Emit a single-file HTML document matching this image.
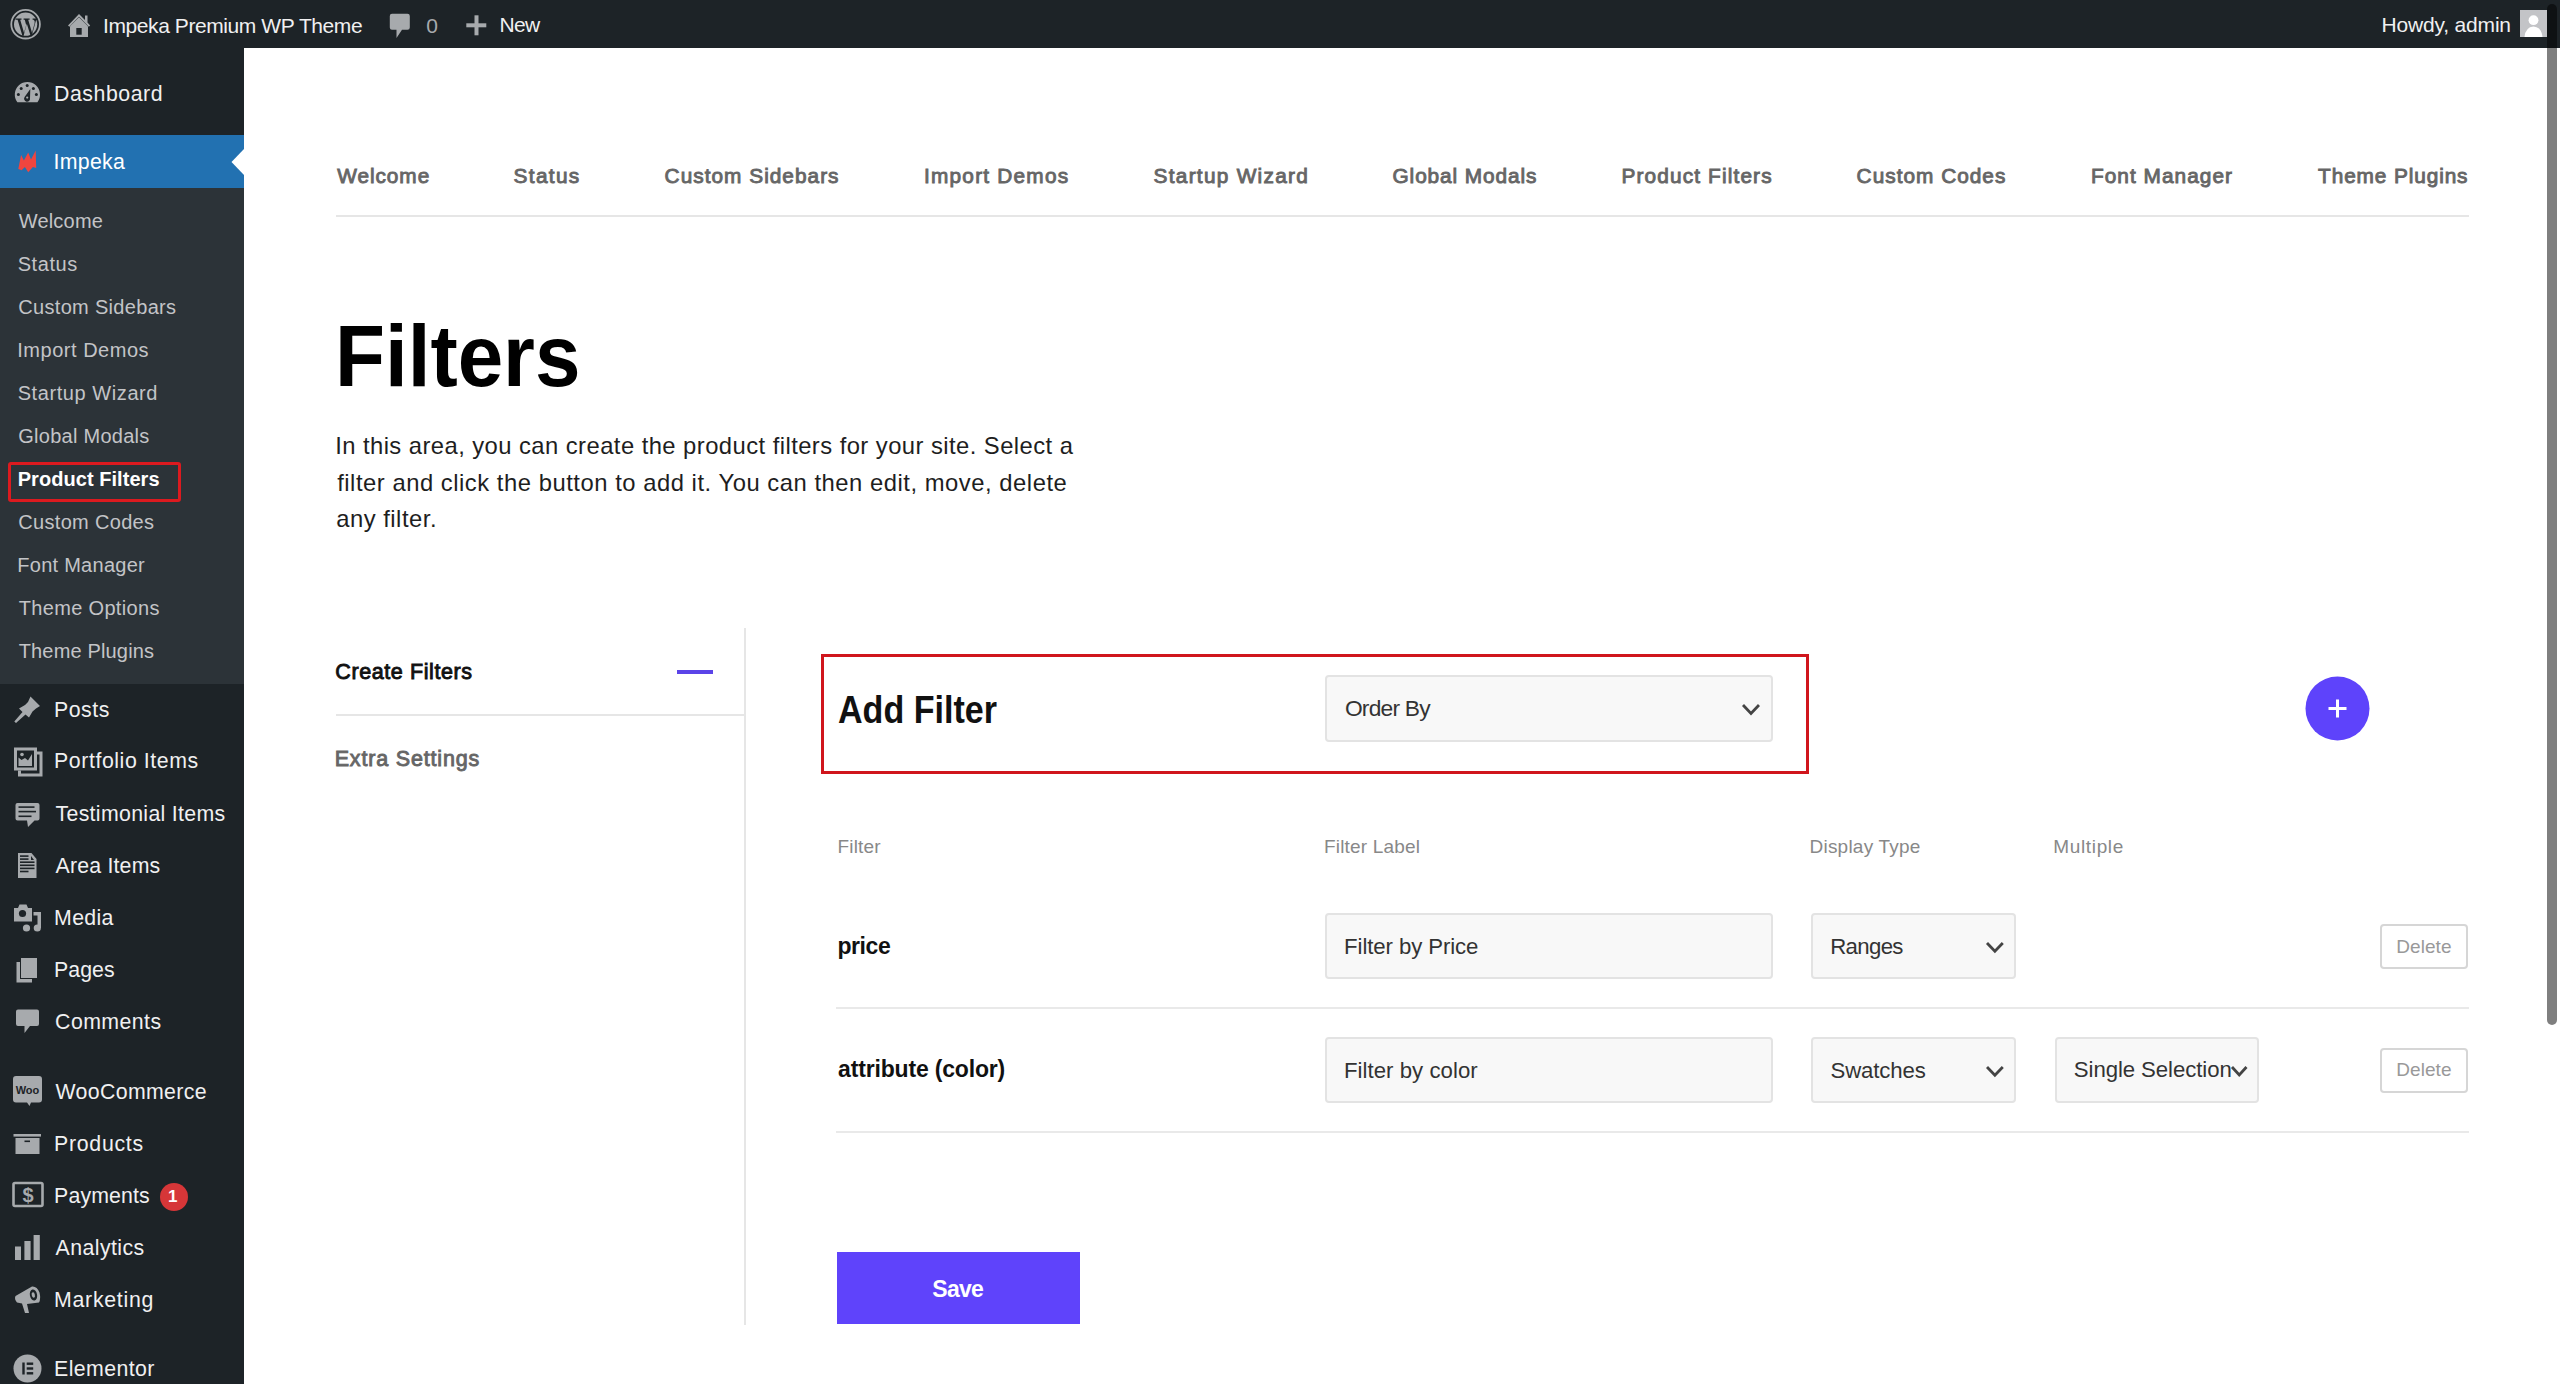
<!DOCTYPE html><html><head><meta charset="utf-8"><style>
*{box-sizing:border-box;margin:0;padding:0}
html,body{width:2560px;height:1384px;overflow:hidden;background:#fff;font-family:"Liberation Sans",sans-serif}
.t{position:absolute;white-space:nowrap;line-height:1;font-family:"Liberation Sans",sans-serif}
.ic{position:absolute;display:block}
.r{position:absolute}
</style></head><body>
<div class="r" style="left:0px;top:0px;width:2560px;height:48px;background:#1d2327"></div>
<div class="r" style="left:0px;top:48px;width:244px;height:1336px;background:#1d2327"></div>
<div class="r" style="left:0px;top:188px;width:244px;height:496px;background:#2c3338"></div>
<div class="r" style="left:0px;top:135px;width:244px;height:53px;background:#2271b1"></div>
<svg class="ic" style="left:230px;top:148px" width="14" height="28" viewBox="0 0 14 28"><path d="M14 1 L1.5 14 L14 27 Z" fill="#fff"/></svg>
<div class="r" style="left:8px;top:461.5px;width:172.5px;height:40px;border:3px solid #dc1a1f;border-radius:3px"></div>
<div class="r" style="left:336px;top:214.5px;width:2133px;height:2px;background:#e6e6e6"></div>
<div class="r" style="left:336px;top:714px;width:408px;height:2px;background:#e6e6e6"></div>
<div class="r" style="left:743.5px;top:628px;width:2px;height:697px;background:#e6e6e6"></div>
<div class="r" style="left:677px;top:670px;width:36px;height:4px;background:#5b44e8"></div>
<div class="r" style="left:821px;top:654px;width:988px;height:120px;border:3px solid #d0161d"></div>
<div class="r" style="left:1324.5px;top:675px;width:448px;height:67px;background:#f8f8f8;border:2px solid #e3e3e3;border-radius:4px"></div>
<svg class="ic" style="left:2305px;top:676px" width="65" height="65" viewBox="0 0 65 65"><circle cx="32.5" cy="32.5" r="32" fill="#5e43fb"/><rect x="23.5" y="31" width="18" height="3" fill="#fff"/><rect x="31" y="23.5" width="3" height="18" fill="#fff"/></svg>
<div class="r" style="left:1324.5px;top:913.3px;width:448px;height:66px;background:#f8f8f8;border:2px solid #e3e3e3;border-radius:4px"></div>
<div class="r" style="left:1810.8px;top:913.3px;width:205px;height:66px;background:#f8f8f8;border:2px solid #e3e3e3;border-radius:4px"></div>
<div class="r" style="left:2379.7px;top:924px;width:88.5px;height:45px;background:#fff;border:2px solid #d6d6d6;border-radius:4px"></div>
<div class="r" style="left:1324.5px;top:1036.8999999999999px;width:448px;height:66px;background:#f8f8f8;border:2px solid #e3e3e3;border-radius:4px"></div>
<div class="r" style="left:1810.8px;top:1036.8999999999999px;width:205px;height:66px;background:#f8f8f8;border:2px solid #e3e3e3;border-radius:4px"></div>
<div class="r" style="left:2379.7px;top:1047.6px;width:88.5px;height:45px;background:#fff;border:2px solid #d6d6d6;border-radius:4px"></div>
<div class="r" style="left:2054.5px;top:1037px;width:204.5px;height:66px;background:#f8f8f8;border:2px solid #e3e3e3;border-radius:4px"></div>
<div class="r" style="left:836px;top:1007px;width:1633px;height:2px;background:#e9e9e9"></div>
<div class="r" style="left:836px;top:1131px;width:1633px;height:2px;background:#e9e9e9"></div>
<div class="r" style="left:837px;top:1251.5px;width:243px;height:72.5px;background:#5f43fb"></div>
<svg class="ic" style="left:1741px;top:703.2px" width="20" height="13.399999999999977" viewBox="0 0 20 13.399999999999977"><path d="M2 2 L10.0 10.399999999999977 L18 2" fill="none" stroke="#444" stroke-width="2.8"/></svg>
<svg class="ic" style="left:1984.7px;top:941.4px" width="19.799999999999955" height="13.300000000000068" viewBox="0 0 19.799999999999955 13.300000000000068"><path d="M2 2 L9.899999999999977 10.300000000000068 L17.799999999999955 2" fill="none" stroke="#444" stroke-width="2.8"/></svg>
<svg class="ic" style="left:1984.5px;top:1064.7px" width="19.799999999999955" height="13.200000000000045" viewBox="0 0 19.799999999999955 13.200000000000045"><path d="M2 2 L9.899999999999977 10.200000000000045 L17.799999999999955 2" fill="none" stroke="#444" stroke-width="2.8"/></svg>
<svg class="ic" style="left:2229.7px;top:1065px" width="18.5" height="13" viewBox="0 0 18.5 13"><path d="M2 2 L9.25 10 L16.5 2" fill="none" stroke="#444" stroke-width="2.8"/></svg>
<div class="r" style="left:2546.5px;top:4px;width:10px;height:1021px;background:rgba(0,0,0,0.5);border-radius:5px"></div>
<svg class="ic" style="left:159.5px;top:1183px" width="28" height="28" viewBox="0 0 28 28"><circle cx="14" cy="14" r="14" fill="#d63638"/></svg>
<div class="t" style="left:168px;top:1188px;font-size:17px;font-weight:700;color:#fff">1</div>

<svg class="ic" style="left:9px;top:7px" width="34" height="34" viewBox="0 0 34 34"><circle cx="16.6" cy="17.2" r="14.3" fill="none" stroke="#a7aaad" stroke-width="1.8"/><circle cx="16.6" cy="17.2" r="11.6" fill="#a7aaad"/><g transform="translate(0 -3.2) scale(1 1.18)"><path d="M6.5 12.5 H12.5 V13.6 H11.2 L15 24.5 L17.2 18.2 L15.8 13.6 H14.6 V12.5 H20.6 V13.6 H19.2 L23 24.5 L25.6 16.5 Q26.2 14.2 24.5 13.6 H23.6 V12.5 H28 L28 13.6 Q27 13.8 26.6 15.2 L22.6 27.8 H21.8 L17.8 17 L14.4 27.8 H13.6 L8.6 13.6 H6.5 Z" fill="#1d2327"/></g></svg>
<svg class="ic" style="left:66px;top:11px" width="26" height="28" viewBox="0 0 26 28"><path d="M2 14.5 L13 3 L19 9 V4.5 H21.5 V11.5 L24.2 14.5 L22.8 15.8 L13 5.8 L3.4 15.8 Z" fill="#a7aaad"/><path d="M4 15.2 L13 6.3 L22 15.2 V26 H4 Z" fill="#a7aaad"/><rect x="10.3" y="17" width="5.4" height="6.7" fill="#1d2327"/></svg>
<svg class="ic" style="left:389px;top:13px" width="22" height="26" viewBox="0 0 22 26"><path d="M3 0.8 H18.5 Q20.8 0.8 20.8 3 V14.5 Q20.8 16.8 18.5 16.8 H13 L7.5 25 L7.5 16.8 H3 Q0.8 16.8 0.8 14.5 V3 Q0.8 0.8 3 0.8 Z" fill="#a7aaad"/></svg>
<svg class="ic" style="left:466px;top:15px" width="21" height="21" viewBox="0 0 21 21"><rect x="8.5" y="0.3" width="4" height="20" fill="#a7aaad"/><rect x="0.3" y="8.3" width="20" height="4" fill="#a7aaad"/></svg>
<svg class="ic" style="left:2520px;top:10px" width="28" height="28" viewBox="0 0 28 28"><rect x="0" y="0" width="27" height="27" fill="#c3c4c7"/><circle cx="13.5" cy="10.2" r="4.9" fill="#fff"/><path d="M4.5 27 Q5.5 17 13.5 16.5 Q21.5 17 22.5 27 Z" fill="#fff"/></svg>
<svg class="ic" style="left:8px;top:72.0px" width="40" height="40" viewBox="0 0 40 40"><path d="M9.35 30.2 A12.6 12.6 0 1 1 29.45 30.2 Z" fill="#a7aaad"/><circle cx="19.2" cy="13.5" r="1.5" fill="#1d2327"/><circle cx="13.2" cy="16.5" r="1.5" fill="#1d2327"/><circle cx="25.4" cy="16.5" r="1.5" fill="#1d2327"/><circle cx="10.4" cy="22.5" r="1.5" fill="#1d2327"/><circle cx="28.4" cy="22.5" r="1.5" fill="#1d2327"/><path d="M22.3 17 L16.6 25 A3 3 0 1 0 22 26 Z" fill="#1d2327"/><circle cx="19.2" cy="25.6" r="1.1" fill="#a7aaad"/></svg>
<svg class="ic" style="left:8px;top:141.0px" width="40" height="40" viewBox="0 0 40 40"><path d="M10.3 28 L13.1 13.9 L15.9 19.5 L20.2 11.5 L23 18.6 L27.7 9.6 L28.2 27 L24.9 26 L20.2 31.2 L16.9 26 L13.6 29.3 Z" fill="#f0453f"/></svg>
<svg class="ic" style="left:8px;top:690.0px" width="40" height="40" viewBox="0 0 40 40"><path d="M22.5 6.5 L32 16 L28 18.5 L24.5 21.5 L21 27.5 L17.5 24.5 L8 33 L6.3 31.5 L14.5 22 L11 18.5 L17 15 L20 12 Z" fill="#a7aaad"/></svg>
<svg class="ic" style="left:8px;top:742.0px" width="40" height="40" viewBox="0 0 40 40"><path d="M11.5 28.5 V33 H33 V11 H28.5" fill="none" stroke="#a7aaad" stroke-width="3"/><rect x="7.5" y="7" width="20" height="20" fill="none" stroke="#a7aaad" stroke-width="3"/><path d="M10.5 24 V15.5 L13.5 18 L17 16 L20 18.5 L24 12 V24 Z" fill="#a7aaad"/><circle cx="14" cy="12.5" r="1.8" fill="#a7aaad"/></svg>
<svg class="ic" style="left:8px;top:794.0px" width="40" height="40" viewBox="0 0 40 40"><path d="M9.5 9 H29.5 Q31.5 9 31.5 11 V24.5 Q31.5 26.5 29.5 26.5 H26.5 L20 33 L19 26.5 H9.5 Q7.5 26.5 7.5 24.5 V11 Q7.5 9 9.5 9 Z" fill="#a7aaad"/><rect x="10.5" y="12.3" width="16" height="1.6" fill="#1d2327"/><rect x="10.5" y="16.8" width="17.5" height="1.6" fill="#1d2327"/><rect x="10.5" y="21.5" width="13" height="1.6" fill="#1d2327"/></svg>
<svg class="ic" style="left:8px;top:846.0px" width="40" height="40" viewBox="0 0 40 40"><path d="M10 7 H23.5 L28.5 13 V32 H10 Z" fill="#a7aaad"/><rect x="12" y="9.3" width="8.5" height="1.6" fill="#1d2327"/><rect x="12" y="12.3" width="8.5" height="1.6" fill="#1d2327"/><rect x="12" y="15.4" width="14.5" height="1.6" fill="#1d2327"/><rect x="12" y="18.5" width="14.5" height="1.6" fill="#1d2327"/><rect x="12" y="21.6" width="14.5" height="1.6" fill="#1d2327"/><rect x="12" y="24.7" width="8.5" height="1.6" fill="#1d2327"/><path d="M23 10 L26 14 H23 Z" fill="#1d2327"/></svg>
<svg class="ic" style="left:8px;top:898.0px" width="40" height="40" viewBox="0 0 40 40"><path d="M6 10 H10 L11.5 6.5 H18.5 L20 10 H24 V23.5 H6 Z" fill="#a7aaad"/><circle cx="14.5" cy="15.5" r="3.6" fill="#1d2327"/><path d="M25.5 14 H33 V30 H29.5 V17.5 H25.5 Z" fill="#a7aaad"/><circle cx="18.5" cy="30" r="3.6" fill="#a7aaad"/><circle cx="29.3" cy="30" r="3.6" fill="#a7aaad"/></svg>
<svg class="ic" style="left:8px;top:950.0px" width="40" height="40" viewBox="0 0 40 40"><path d="M8.5 12 H12 V29 H24 V32.5 H8.5 Z" fill="#a7aaad"/><rect x="13" y="8" width="16" height="20" fill="#a7aaad"/></svg>
<svg class="ic" style="left:8px;top:1002.0px" width="40" height="40" viewBox="0 0 40 40"><path d="M10 7.5 H29 Q31 7.5 31 9.5 V22 Q31 24 29 24 H22 L16.5 31 V24 H10 Q8 24 8 22 V9.5 Q8 7.5 10 7.5 Z" fill="#a7aaad"/></svg>
<svg class="ic" style="left:8px;top:1071.0px" width="40" height="40" viewBox="0 0 40 40"><path d="M8 5 H31 Q34 5 34 8 V28.5 Q34 31.5 31 31.5 H23 L21.5 35 L19 31.5 H8 Q5 31.5 5 28.5 V8 Q5 5 8 5 Z" fill="#a7aaad"/><text x="19.5" y="22.5" text-anchor="middle" font-family="Liberation Sans" font-weight="700" font-size="11" fill="#1d2327">Woo</text></svg>
<svg class="ic" style="left:8px;top:1123.0px" width="40" height="40" viewBox="0 0 40 40"><rect x="5.5" y="11" width="27.5" height="2.6" fill="#a7aaad"/><rect x="7.5" y="15" width="24" height="16" fill="#a7aaad"/><rect x="16.5" y="17.5" width="5.5" height="1.6" fill="#1d2327"/></svg>
<svg class="ic" style="left:8px;top:1176.0px" width="40" height="40" viewBox="0 0 40 40"><rect x="5.5" y="7" width="29" height="23" rx="1.5" fill="none" stroke="#a7aaad" stroke-width="2.6"/><text x="20" y="25.5" text-anchor="middle" font-family="Liberation Sans" font-weight="700" font-size="20" fill="#a7aaad">$</text></svg>
<svg class="ic" style="left:8px;top:1228.0px" width="40" height="40" viewBox="0 0 40 40"><rect x="7" y="18.5" width="6" height="13.5" fill="#a7aaad"/><rect x="16.4" y="13" width="6.2" height="19" fill="#a7aaad"/><rect x="25.6" y="7" width="6.2" height="25" fill="#a7aaad"/></svg>
<svg class="ic" style="left:8px;top:1279.0px" width="40" height="40" viewBox="0 0 40 40"><path d="M7.5 17 Q6 20 9 23.5 L14 24.5 L17 34 L21 34 L19 25 L31 23.5 Q33 20 31.5 13.5 Q29 7 24 7.5 Z" fill="#a7aaad"/><ellipse cx="25.5" cy="16" rx="3.6" ry="5.6" fill="#1d2327" transform="rotate(-12 25.5 16)"/><ellipse cx="25.3" cy="16" rx="1.6" ry="2.8" fill="#a7aaad" transform="rotate(-12 25.3 16)"/></svg>
<svg class="ic" style="left:8px;top:1349.0px" width="40" height="40" viewBox="0 0 40 40"><circle cx="19.5" cy="19.5" r="14" fill="#a7aaad"/><rect x="14.3" y="13.5" width="2.4" height="12" fill="#1d2327"/><rect x="18.7" y="13.5" width="6.5" height="2.4" fill="#1d2327"/><rect x="18.7" y="18.3" width="6.5" height="2.4" fill="#1d2327"/><rect x="18.7" y="23.1" width="6.5" height="2.4" fill="#1d2327"/></svg>
<div class="t" id="ab1" style="left:103.10px;top:14.54px;font-size:21px;font-weight:400;color:#f0f0f1;letter-spacing:-0.422px;">Impeka Premium WP Theme</div>
<div class="t" id="ab0" style="left:426.24px;top:14.54px;font-size:21px;font-weight:400;color:#a7aaad;letter-spacing:0.000px;">0</div>
<div class="t" id="abn" style="left:499.60px;top:13.90px;font-size:21px;font-weight:400;color:#f0f0f1;letter-spacing:-0.660px;">New</div>
<div class="t" id="abh" style="left:2381.60px;top:13.76px;font-size:21px;font-weight:400;color:#f0f0f1;letter-spacing:-0.187px;">Howdy, admin</div>
<div class="t" id="mm0" style="left:54.10px;top:83.53px;font-size:21.3px;font-weight:400;color:#f0f0f1;letter-spacing:0.528px;">Dashboard</div>
<div class="t" id="mm1" style="left:53.50px;top:151.93px;font-size:21.3px;font-weight:400;color:#ffffff;letter-spacing:0.300px;">Impeka</div>
<div class="t" id="mm2" style="left:54.10px;top:699.93px;font-size:21.3px;font-weight:400;color:#f0f0f1;letter-spacing:0.490px;">Posts</div>
<div class="t" id="mm3" style="left:54.10px;top:751.43px;font-size:21.3px;font-weight:400;color:#f0f0f1;letter-spacing:0.568px;">Portfolio Items</div>
<div class="t" id="mm4" style="left:55.50px;top:803.93px;font-size:21.3px;font-weight:400;color:#f0f0f1;letter-spacing:0.326px;">Testimonial Items</div>
<div class="t" id="mm5" style="left:55.50px;top:855.73px;font-size:21.3px;font-weight:400;color:#f0f0f1;letter-spacing:0.196px;">Area Items</div>
<div class="t" id="mm6" style="left:54.10px;top:908.23px;font-size:21.3px;font-weight:400;color:#f0f0f1;letter-spacing:0.295px;">Media</div>
<div class="t" id="mm7" style="left:54.10px;top:960.23px;font-size:21.3px;font-weight:400;color:#f0f0f1;letter-spacing:0.045px;">Pages</div>
<div class="t" id="mm8" style="left:55.10px;top:1011.93px;font-size:21.3px;font-weight:400;color:#f0f0f1;letter-spacing:0.425px;">Comments</div>
<div class="t" id="mm9" style="left:55.50px;top:1081.53px;font-size:21.3px;font-weight:400;color:#f0f0f1;letter-spacing:0.350px;">WooCommerce</div>
<div class="t" id="mm10" style="left:54.10px;top:1133.73px;font-size:21.3px;font-weight:400;color:#f0f0f1;letter-spacing:0.706px;">Products</div>
<div class="t" id="mm11" style="left:54.10px;top:1185.73px;font-size:21.3px;font-weight:400;color:#f0f0f1;letter-spacing:0.134px;">Payments</div>
<div class="t" id="mm12" style="left:55.50px;top:1237.73px;font-size:21.3px;font-weight:400;color:#f0f0f1;letter-spacing:0.438px;">Analytics</div>
<div class="t" id="mm13" style="left:54.10px;top:1289.93px;font-size:21.3px;font-weight:400;color:#f0f0f1;letter-spacing:0.712px;">Marketing</div>
<div class="t" id="mm14" style="left:54.10px;top:1358.93px;font-size:21.3px;font-weight:400;color:#f0f0f1;letter-spacing:0.400px;">Elementor</div>
<div class="t" id="sm0" style="left:18.68px;top:211.37px;font-size:20px;font-weight:400;color:#c3c4c7;letter-spacing:0.206px;">Welcome</div>
<div class="t" id="sm1" style="left:17.68px;top:254.32px;font-size:20px;font-weight:400;color:#c3c4c7;letter-spacing:0.592px;">Status</div>
<div class="t" id="sm2" style="left:18.28px;top:297.27px;font-size:20px;font-weight:400;color:#c3c4c7;letter-spacing:0.317px;">Custom Sidebars</div>
<div class="t" id="sm3" style="left:17.28px;top:340.22px;font-size:20px;font-weight:400;color:#c3c4c7;letter-spacing:0.518px;">Import Demos</div>
<div class="t" id="sm4" style="left:17.68px;top:383.17px;font-size:20px;font-weight:400;color:#c3c4c7;letter-spacing:0.580px;">Startup Wizard</div>
<div class="t" id="sm5" style="left:18.28px;top:426.12px;font-size:20px;font-weight:400;color:#c3c4c7;letter-spacing:0.266px;">Global Modals</div>
<div class="t" id="sm6" style="left:17.68px;top:469.07px;font-size:20px;font-weight:700;color:#ffffff;letter-spacing:0.052px;">Product Filters</div>
<div class="t" id="sm7" style="left:18.28px;top:512.02px;font-size:20px;font-weight:400;color:#c3c4c7;letter-spacing:0.315px;">Custom Codes</div>
<div class="t" id="sm8" style="left:17.28px;top:554.97px;font-size:20px;font-weight:400;color:#c3c4c7;letter-spacing:0.266px;">Font Manager</div>
<div class="t" id="sm9" style="left:18.68px;top:597.92px;font-size:20px;font-weight:400;color:#c3c4c7;letter-spacing:0.335px;">Theme Options</div>
<div class="t" id="sm10" style="left:18.68px;top:640.87px;font-size:20px;font-weight:400;color:#c3c4c7;letter-spacing:0.164px;">Theme Plugins</div>
<div class="t" id="tb0" style="left:337.24px;top:166.47px;font-size:20.8px;font-weight:400;color:#666666;letter-spacing:0.946px;-webkit-text-stroke:0.9px #666666;">Welcome</div>
<div class="t" id="tb1" style="left:513.60px;top:166.47px;font-size:20.8px;font-weight:400;color:#666666;letter-spacing:1.336px;-webkit-text-stroke:0.9px #666666;">Status</div>
<div class="t" id="tb2" style="left:664.60px;top:166.47px;font-size:20.8px;font-weight:400;color:#666666;letter-spacing:1.029px;-webkit-text-stroke:0.9px #666666;">Custom Sidebars</div>
<div class="t" id="tb3" style="left:924.00px;top:166.47px;font-size:20.8px;font-weight:400;color:#666666;letter-spacing:1.227px;-webkit-text-stroke:0.9px #666666;">Import Demos</div>
<div class="t" id="tb4" style="left:1153.60px;top:166.47px;font-size:20.8px;font-weight:400;color:#666666;letter-spacing:1.284px;-webkit-text-stroke:0.9px #666666;">Startup Wizard</div>
<div class="t" id="tb5" style="left:1392.50px;top:166.47px;font-size:20.8px;font-weight:400;color:#666666;letter-spacing:0.917px;-webkit-text-stroke:0.9px #666666;">Global Modals</div>
<div class="t" id="tb6" style="left:1621.50px;top:166.47px;font-size:20.8px;font-weight:400;color:#666666;letter-spacing:1.143px;-webkit-text-stroke:0.9px #666666;">Product Filters</div>
<div class="t" id="tb7" style="left:1856.60px;top:166.47px;font-size:20.8px;font-weight:400;color:#666666;letter-spacing:1.018px;-webkit-text-stroke:0.9px #666666;">Custom Codes</div>
<div class="t" id="tb8" style="left:2091.00px;top:166.47px;font-size:20.8px;font-weight:400;color:#666666;letter-spacing:1.045px;-webkit-text-stroke:0.9px #666666;">Font Manager</div>
<div class="t" id="tb9" style="left:2318.10px;top:166.47px;font-size:20.8px;font-weight:400;color:#666666;letter-spacing:0.891px;-webkit-text-stroke:0.9px #666666;">Theme Plugins</div>
<div class="t" id="h1" style="left:334.92px;top:311.52px;font-size:87px;font-weight:700;color:#000000;letter-spacing:0.000px;transform:scaleX(0.94);transform-origin:0 0;">Filters</div>
<div class="t" id="p1" style="left:335.14px;top:433.81px;font-size:23.8px;font-weight:400;color:#1e1e1e;letter-spacing:0.443px;">In this area, you can create the product filters for your site. Select a</div>
<div class="t" id="p2" style="left:337.14px;top:470.63px;font-size:23.8px;font-weight:400;color:#1e1e1e;letter-spacing:0.528px;">filter and click the button to add it. You can then edit, move, delete</div>
<div class="t" id="p3" style="left:336.14px;top:506.85px;font-size:23.8px;font-weight:400;color:#1e1e1e;letter-spacing:0.518px;">any filter.</div>
<div class="t" id="cf" style="left:335.28px;top:662.18px;font-size:21.5px;font-weight:400;color:#111111;letter-spacing:0.596px;-webkit-text-stroke:0.9px #111111;">Create Filters</div>
<div class="t" id="es" style="left:334.68px;top:748.80px;font-size:21.5px;font-weight:400;color:#666666;letter-spacing:0.827px;-webkit-text-stroke:0.9px #666666;">Extra Settings</div>
<div class="t" id="af" style="left:837.82px;top:690.79px;font-size:38px;font-weight:700;color:#111111;letter-spacing:0.000px;transform:scaleX(0.8965);transform-origin:0 0;">Add Filter</div>
<div class="t" id="ob" style="left:1344.92px;top:697.48px;font-size:22.8px;font-weight:400;color:#333333;letter-spacing:-0.794px;">Order By</div>
<div class="t" id="hf" style="left:837.45px;top:837.23px;font-size:19px;font-weight:400;color:#888888;letter-spacing:0.200px;">Filter</div>
<div class="t" id="hl" style="left:1324.00px;top:837.23px;font-size:19px;font-weight:400;color:#888888;letter-spacing:0.169px;">Filter Label</div>
<div class="t" id="hd" style="left:1809.50px;top:837.23px;font-size:19px;font-weight:400;color:#888888;letter-spacing:0.224px;">Display Type</div>
<div class="t" id="hm" style="left:2053.32px;top:837.23px;font-size:19px;font-weight:400;color:#888888;letter-spacing:0.640px;">Multiple</div>
<div class="t" id="r1a" style="left:837.50px;top:934.67px;font-size:23px;font-weight:700;color:#111111;letter-spacing:-0.445px;">price</div>
<div class="t" id="r1b" style="left:1344.10px;top:935.94px;font-size:22.2px;font-weight:400;color:#333333;letter-spacing:-0.093px;">Filter by Price</div>
<div class="t" id="r1c" style="left:1830.24px;top:936.26px;font-size:22.2px;font-weight:400;color:#333333;letter-spacing:-0.660px;">Ranges</div>
<div class="t" id="r1d" style="left:2396.32px;top:936.91px;font-size:19px;font-weight:400;color:#999999;letter-spacing:0.048px;">Delete</div>
<div class="t" id="r2a" style="left:838.10px;top:1058.35px;font-size:23px;font-weight:700;color:#111111;letter-spacing:-0.173px;">attribute (color)</div>
<div class="t" id="r2b" style="left:1343.92px;top:1059.94px;font-size:22.2px;font-weight:400;color:#333333;letter-spacing:0.050px;">Filter by color</div>
<div class="t" id="r2c" style="left:1830.46px;top:1059.94px;font-size:22.2px;font-weight:400;color:#333333;letter-spacing:-0.114px;">Swatches</div>
<div class="t" id="r2m" style="left:2073.82px;top:1059.30px;font-size:22.2px;font-weight:400;color:#333333;letter-spacing:-0.080px;">Single Selection</div>
<div class="t" id="r2d" style="left:2396.32px;top:1060.41px;font-size:19px;font-weight:400;color:#999999;letter-spacing:0.048px;">Delete</div>
<div class="t" id="sv" style="left:932.32px;top:1277.63px;font-size:23px;font-weight:700;color:#ffffff;letter-spacing:-0.760px;">Save</div>
</body></html>
